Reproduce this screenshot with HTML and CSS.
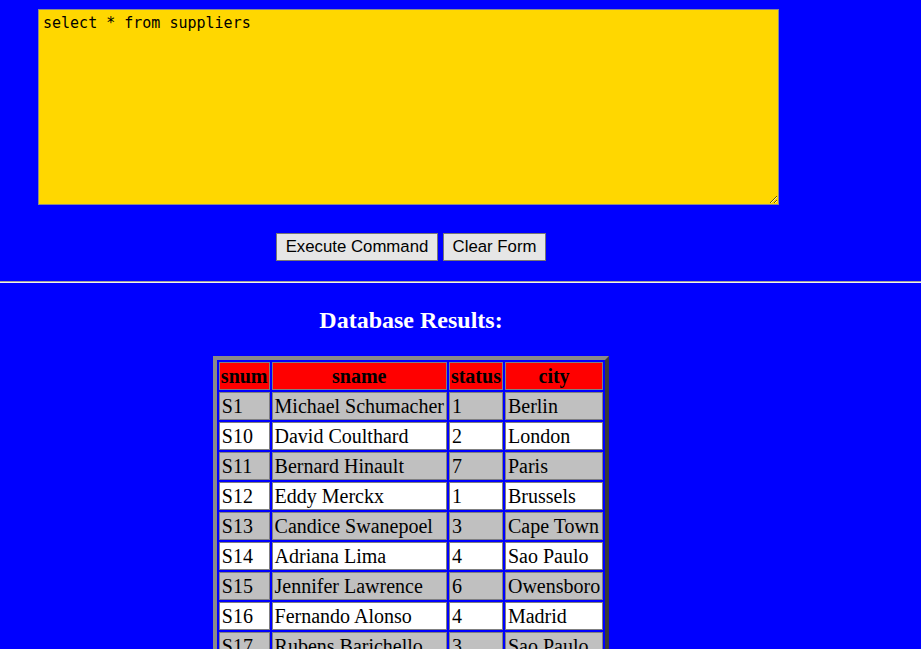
FILE: index.html
```html
<!DOCTYPE html>
<html>
<head>
<meta charset="utf-8">
<link rel="stylesheet" href="styles.css">
</head>
<body>
<form class="cmd-form">
  <div class="editor-row">
    <textarea class="editor">select * from suppliers</textarea>
  </div>
  <div class="button-row">
    <button type="button" class="btn">Execute Command</button>
    <button type="button" class="btn">Clear Form</button>
  </div>
</form>
<hr class="divider">
<section class="results">
  <h2 class="results-title">Database Results:</h2>
  <table class="results-table">
    <thead>
      <tr><th>snum</th><th>sname</th><th>status</th><th>city</th></tr>
    </thead>
    <tbody>
      <tr class="odd"><td>S1</td><td>Michael Schumacher</td><td>1</td><td>Berlin</td></tr>
      <tr class="even"><td>S10</td><td>David Coulthard</td><td>2</td><td>London</td></tr>
      <tr class="odd"><td>S11</td><td>Bernard Hinault</td><td>7</td><td>Paris</td></tr>
      <tr class="even"><td>S12</td><td>Eddy Merckx</td><td>1</td><td>Brussels</td></tr>
      <tr class="odd"><td>S13</td><td>Candice Swanepoel</td><td>3</td><td>Cape Town</td></tr>
      <tr class="even"><td>S14</td><td>Adriana Lima</td><td>4</td><td>Sao Paulo</td></tr>
      <tr class="odd"><td>S15</td><td>Jennifer Lawrence</td><td>6</td><td>Owensboro</td></tr>
      <tr class="even"><td>S16</td><td>Fernando Alonso</td><td>4</td><td>Madrid</td></tr>
      <tr class="odd"><td>S17</td><td>Rubens Barichello</td><td>3</td><td>Sao Paulo</td></tr>
      <tr class="even"><td>S18</td><td>Lewis Hamilton</td><td>2</td><td>London</td></tr>
    </tbody>
  </table>
</section>
</body>
</html>
```
FILE: styles.css
```css
html, body {
  margin: 0;
  padding: 0;
  background: #0000ff;
}
body {
  font-family: "Liberation Serif", "Times New Roman", serif;
  color: #000;
}
.cmd-form {
  width: 822px;
  margin: 0;
  padding-top: 9px;
}
.editor-row {
  display: flex;
  padding-left: 38px;
}
.editor {
  box-sizing: border-box;
  width: 741px;
  height: 196px;
  margin: 0;
  padding: 4px 4px;
  background: #ffd700;
  border: 1px solid #8a8a8a;
  font-family: "DejaVu Sans Mono", "Liberation Mono", monospace;
  font-size: 15px;
  line-height: 19px;
  color: #000;
  resize: both;
}
.button-row {
  display: flex;
  justify-content: center;
  gap: 5px;
  margin-top: 28px;
}
.btn {
  box-sizing: border-box;
  height: 28px;
  padding: 1px 6px;
  margin: 0;
  font-family: "Liberation Sans", Arial, sans-serif;
  font-size: 16.8px;
  color: #000;
  background: #e6e6e6;
  border: 1px solid #767676;
  border-radius: 0;
}
.btn:first-child {
  width: 162px;
}
.btn:last-child {
  width: 103px;
}
.divider {
  margin: 20px 0 0 0;
  height: 0;
  border: 0;
  border-top: 1px solid #a0a0a0;
  border-bottom: 1px solid #f0f0f0;
}
.results {
  width: 822px;
  display: flex;
  flex-direction: column;
  align-items: center;
}
.results-title {
  margin: 23px 0 0 0;
  font-size: 24px;
  line-height: 28px;
  font-weight: bold;
  color: #fff;
}
.results-table {
  margin-top: 22px;
  border-collapse: separate;
  border-spacing: 2px;
  border-width: 4px;
  border-style: solid;
  border-color: #8a8a8a #3a3a3a #3a3a3a #8a8a8a;
  font-size: 20px;
}
.results-table th,
.results-table td {
  border: 1px solid #808080;
  padding: 1px 2px;
  line-height: 24px;
  white-space: nowrap;
}
.results-table th {
  background: #ff0000;
  font-weight: bold;
  text-align: center;
  padding: 1px 1px;
}
.results-table td {
  text-align: left;
}
.results-table tr.odd td {
  background: #c0c0c0;
}
.results-table tr.even td {
  background: #ffffff;
}
```
